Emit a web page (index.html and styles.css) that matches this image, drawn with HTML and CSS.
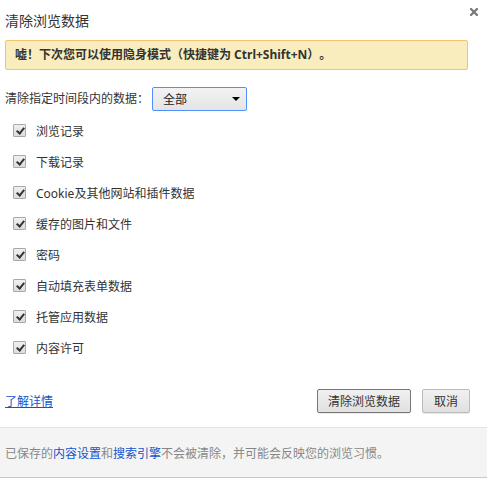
FILE: index.html
```html
<!DOCTYPE html>
<html lang="zh-CN">

<head>
    <meta charset="UTF-8">
    <title>清除浏览数据</title>
    <link rel="stylesheet" href="styles.css">
</head>

<body>
    <div class="dialog">
        <!-- 标题 -->
        <div class="dialog-header">
            <h1 class="dialog-title">清除浏览数据</h1>
            <span class="close-btn">
                <svg width="8" height="8" viewBox="0 0 8 8">
                    <path d="M1 1L7 7M7 1L1 7" stroke="#777" stroke-width="2.2" stroke-linecap="square" />
                </svg>
            </span>
        </div>

        <div class="dialog-body">
            <div class="notice">嘘！下次您可以使用隐身模式（快捷键为 Ctrl+Shift+N）。</div>

            <div class="range-row">
                <span class="range-label">清除指定时间段内的数据：</span>
                <div class="select-box">
                    <span>全部</span>
                    <span class="select-arrow"></span>
                </div>
            </div>

            <ul class="check-list">
                <li><span class="checkbox"></span>浏览记录</li>
                <li><span class="checkbox"></span>下载记录</li>
                <li><span class="checkbox"></span>Cookie及其他网站和插件数据</li>
                <li><span class="checkbox"></span>缓存的图片和文件</li>
                <li><span class="checkbox"></span>密码</li>
                <li><span class="checkbox"></span>自动填充表单数据</li>
                <li><span class="checkbox"></span>托管应用数据</li>
                <li><span class="checkbox"></span>内容许可</li>
            </ul>

            <div class="action-row">
                <a href="#" class="more-link">了解详情</a>
                <div class="buttons">
                    <button class="btn btn-default">清除浏览数据</button>
                    <button class="btn btn-cancel">取消</button>
                </div>
            </div>
        </div>

        <!-- 底部说明 -->
        <div class="dialog-footer">
            已保存的<a href="#">内容设置</a>和<a href="#">搜索引擎</a>不会被清除，并可能会反映您的浏览习惯。
        </div>
    </div>
</body>

</html>
```

FILE: styles.css
```css
html,
body {
    margin: 0;
    padding: 0;
    background-color: #fff;
}

body {
    font-family: "Noto Sans", "Noto Sans CJK SC", sans-serif;
    font-size: 12px;
    color: #333;
    /* 全角标点保持全宽 */
    text-spacing-trim: space-all;
}

.dialog {
    position: relative;
    width: 487px;
}

.dialog-header {
    height: 40px;
    padding: 12px 0 0 5px;
    box-sizing: border-box;
}

.dialog-title {
    margin: 0;
    font-size: 14px;
    font-weight: normal;
    line-height: 18px;
    color: #333;
}

.close-btn {
    position: absolute;
    top: 8px;
    right: 9px;
    width: 8px;
    height: 8px;
    line-height: 0;
}

.dialog-body {
    padding: 0 17px 0 5px;
}

/* 提示条 */
.notice {
    height: 30px;
    margin-right: 2px;
    box-sizing: border-box;
    padding-left: 9px;
    line-height: 28px;
    background-color: #f9edbe;
    border: 1px solid #f0c36d;
    border-radius: 2px;
    font-weight: bold;
    color: #333;
}

.range-row {
    display: flex;
    align-items: center;
    height: 24px;
    margin-top: 17px;
}

.range-label {
    line-height: 24px;
}

.select-box {
    display: flex;
    align-items: center;
    justify-content: space-between;
    width: 95px;
    height: 24px;
    margin-left: 3px;
    padding: 0 6px 0 10px;
    box-sizing: border-box;
    border: 1px solid #4d90fe;
    border-radius: 2px;
    background: linear-gradient(#f3f3f3, #e4e4e4);
    color: #222;
}

.select-arrow {
    width: 0;
    height: 0;
    border-left: 4px solid transparent;
    border-right: 4px solid transparent;
    border-top: 4px solid #000;
}

/* 复选框列表 */
.check-list {
    list-style: none;
    margin: 4px 0 0 0;
    padding: 0;
}

.check-list li {
    display: flex;
    align-items: center;
    height: 31px;
    padding-left: 8px;
}

.checkbox {
    position: relative;
    width: 11px;
    height: 11px;
    margin-right: 10px;
    border: 1px solid #a8a8a8;
    border-radius: 1px;
    background: linear-gradient(#f0f0f0, #dcdcdc);
}

.checkbox::after {
    content: "";
    position: absolute;
    left: 4px;
    top: 1px;
    width: 3px;
    height: 6px;
    border-right: 2px solid #333;
    border-bottom: 2px solid #333;
    transform: rotate(40deg);
}

.action-row {
    display: flex;
    align-items: center;
    justify-content: space-between;
    height: 24px;
    margin-top: 26px;
}

.more-link {
    color: #15c;
    text-decoration: underline;
}

.buttons {
    display: flex;
    gap: 11px;
}

.btn {
    height: 24px;
    padding: 0 10px;
    font-family: inherit;
    font-size: 12px;
    color: #333;
    border: 1px solid #bbb;
    border-radius: 2px;
    background: linear-gradient(#f1f1f1, #e0e0e0);
    box-shadow: 0 1px 0 rgba(0, 0, 0, 0.08);
    cursor: pointer;
}

.btn-default {
    border-color: #777;
}

.btn-cancel {
    min-width: 48px;
}

/* 底部 */
.dialog-footer {
    margin-top: 14px;
    height: 51px;
    box-sizing: border-box;
    padding: 17px 0 0 5px;
    line-height: 18px;
    background-color: #f4f4f4;
    border-top: 1px solid #e4e4e4;
    border-bottom: 1px solid #c8c8c8;
    color: #888;
}

.dialog-footer a {
    color: #15c;
    text-decoration: none;
}
```
